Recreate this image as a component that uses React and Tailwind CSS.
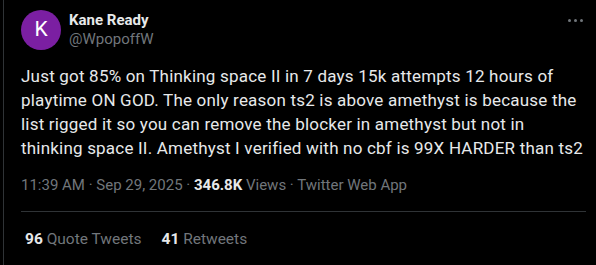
export default function App() {
  return (
    <div className="w-[596px] h-[265px] bg-black overflow-hidden" style={{ fontFamily: 'Roboto, "Liberation Sans", sans-serif' }}>
      <div className="ml-[3px] h-full border-l border-[#2f3336] pl-[17px] pr-[10px]">
        <div className="flex pt-[10px]">
          <div className="w-10 h-10 rounded-full bg-[#7b1fa2] flex items-center justify-center text-white text-[21px]">K</div>
          <div className="ml-2 flex-1 leading-[19px]">
            <div className="text-[15px] font-bold text-[#e7e9ea] mt-[1px]">Kane Ready</div>
            <div className="text-[15px] text-[#71767b]">@WpopoffW</div>
          </div>
          <div className="flex gap-[3px] pt-[9px] pr-[3px]">
            <span className="w-[3px] h-[3px] rounded-full bg-[#71767b]" />
            <span className="w-[3px] h-[3px] rounded-full bg-[#71767b]" />
            <span className="w-[3px] h-[3px] rounded-full bg-[#71767b]" />
          </div>
        </div>
        <p className="mt-[14px] text-[17px] leading-6 tracking-[0.2px] text-[#e7e9ea]">
          Just got 85% on Thinking space II in 7 days 15k attempts 12 hours of playtime ON GOD. The only reason ts2 is above amethyst is because the list rigged it so you can remove the blocker in amethyst but not in thinking space II. Amethyst I verified with no cbf is 99X HARDER than ts2
        </p>
        <div className="mt-[15px] text-[15px] text-[#71767b] leading-5">
          11:39 AM · Sep 29, 2025 · <span className="font-bold text-[#e7e9ea]">346.8K</span> Views · Twitter Web App
        </div>
        <div className="mt-[16px] border-t border-[#2f3336]" />
        <div className="flex gap-5 pl-1 pt-[17px] text-[15.5px] leading-5 text-[#71767b]">
          <div><span className="font-bold text-[#e7e9ea]">96</span> Quote Tweets</div>
          <div><span className="font-bold text-[#e7e9ea]">41</span> Retweets</div>
        </div>
      </div>
    </div>
  );
}
